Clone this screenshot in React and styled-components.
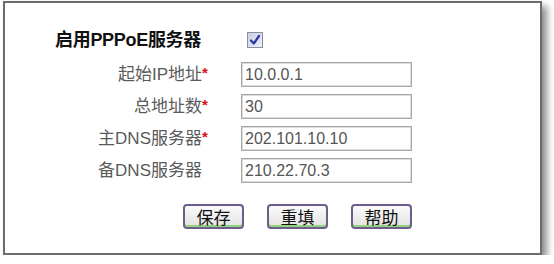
import React from "react";
import styled, { createGlobalStyle } from "styled-components";

const Global = createGlobalStyle`
  html, body { margin: 0; padding: 0; background: #fff; }
  body { font-family: "Liberation Sans", "Noto Sans CJK SC", sans-serif; }
`;

const Frame = styled.div`
  box-sizing: border-box;
  margin: 1px 0 0 3px;
  width: 539px;
  height: 254px;
  border: 2px solid #6c6c6c;
  background: #fff;
  box-shadow: 5px 5px 7px rgba(0, 0, 0, 0.45);
  padding: 24px 0 0 50px;
`;

const TitleRow = styled.div`
  display: grid;
  grid-template-columns: 157px 171px;
  column-gap: 29px;
  height: 25px;
  align-items: center;
  margin-bottom: 10px;
`;

const Title = styled.div`
  font-family: "Liberation Sans", "Noto Sans CJK SC", sans-serif;
  font-weight: bold;
  font-size: 18px;
  line-height: 20px;
  color: #111;
  letter-spacing: -0.3px;
  white-space: nowrap;
`;

const Check = styled.span`
  box-sizing: border-box;
  display: flex;
  align-items: center;
  justify-content: center;
  width: 16px;
  height: 16px;
  margin-left: 6px;
  border: 1px solid #8a8ca0;
  background: linear-gradient(135deg, #cfd0e4 0%, #eceef8 100%);
`;

const Form = styled.div`
  display: grid;
  grid-template-columns: 157px 171px;
  column-gap: 29px;
  row-gap: 7px;
  align-items: center;
`;

const Label = styled.label`
  text-align: right;
  font-size: 17px;
  line-height: 20px;
  color: #5a5a5a;
  white-space: nowrap;
  padding-right: 1px;
`;

const Star = styled.span`
  display: inline-block;
  width: 9px;
  text-align: left;
  color: #e01010;
  font-weight: bold;
  font-size: 15px;
  position: relative;
  top: -2px;
  visibility: ${(p) => (p.$show ? "visible" : "hidden")};
`;

const Input = styled.input`
  box-sizing: border-box;
  width: 171px;
  height: 25px;
  margin: 0;
  border: 1px solid #a6a6a6;
  box-shadow: inset 0 0 0 1px #dcdcdc;
  padding: 1px 0 0 3px;
  font-family: "Liberation Sans", sans-serif;
  font-size: 16px;
  color: #555;
  background: #fff;
  outline: none;
`;

const Buttons = styled.div`
  display: flex;
  gap: 23px;
  margin: 21px 0 0 128px;
`;

const Button = styled.button`
  box-sizing: border-box;
  width: 61px;
  height: 25px;
  padding: 0;
  border: 2px solid #6e5c8e;
  border-radius: 4px;
  background: linear-gradient(#fbfbfb, #e2e2e2);
  box-shadow: inset 0 -2px 0 #92d47a;
  font-family: "Noto Sans CJK SC", sans-serif;
  font-size: 17px;
  line-height: 20px;
  color: #111;
`;

const rows = [
  { label: "起始IP地址", req: true, value: "10.0.0.1" },
  { label: "总地址数", req: true, value: "30" },
  { label: "主DNS服务器", req: true, value: "202.101.10.10" },
  { label: "备DNS服务器", req: false, value: "210.22.70.3" },
];

export default function App() {
  return (
    <>
      <Global />
      <Frame>
        <TitleRow>
          <Title>启用PPPoE服务器</Title>
          <Check>
            <svg width="12" height="12" viewBox="0 0 12 12">
              <path d="M2 6.5 L4.8 9.5 L10 2" fill="none" stroke="#2a36a8" strokeWidth="2.2" strokeLinecap="round" strokeLinejoin="round" />
            </svg>
          </Check>
        </TitleRow>
        <Form>
          {rows.map((r) => (
            <React.Fragment key={r.label}>
              <Label>
                {r.label}
                <Star $show={r.req}>*</Star>
              </Label>
              <Input defaultValue={r.value} />
            </React.Fragment>
          ))}
        </Form>
        <Buttons>
          <Button>保存</Button>
          <Button>重填</Button>
          <Button>帮助</Button>
        </Buttons>
      </Frame>
    </>
  );
}
